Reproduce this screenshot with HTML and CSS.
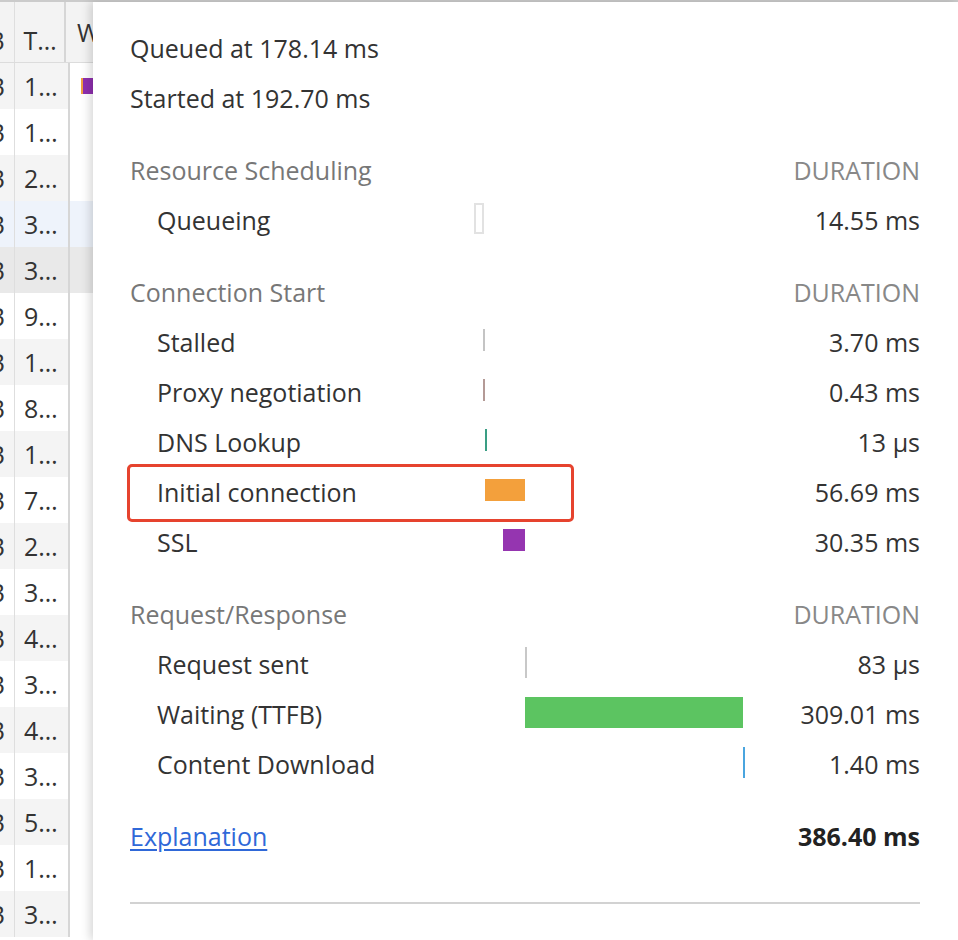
FILE: index.html
```html
<!DOCTYPE html>
<html lang="en">
<head>
    <meta charset="UTF-8">
    <meta name="viewport" content="width=device-width, initial-scale=1.0">
    <title>Timing</title>
    <link rel="stylesheet" href="styles.css">
</head>
<body>
    <div class="page">
        <div class="network">
            <div class="net-row net-header">
                <div class="col-size">kB</div>
                <div class="col-time">T…</div>
                <div class="col-fall">W</div>
            </div>
            <div class="net-row"><div class="col-size">kB</div><div class="col-time">1…</div><div class="col-fall"><span class="mini-bar"></span></div></div>
            <div class="net-row"><div class="col-size">kB</div><div class="col-time">1…</div><div class="col-fall"></div></div>
            <div class="net-row"><div class="col-size">kB</div><div class="col-time">2…</div><div class="col-fall"></div></div>
            <div class="net-row hover"><div class="col-size">kB</div><div class="col-time">3…</div><div class="col-fall"></div></div>
            <div class="net-row selected"><div class="col-size">kB</div><div class="col-time">3…</div><div class="col-fall"></div></div>
            <div class="net-row"><div class="col-size">kB</div><div class="col-time">9…</div><div class="col-fall"></div></div>
            <div class="net-row"><div class="col-size">kB</div><div class="col-time">1…</div><div class="col-fall"></div></div>
            <div class="net-row"><div class="col-size">kB</div><div class="col-time">8…</div><div class="col-fall"></div></div>
            <div class="net-row"><div class="col-size">kB</div><div class="col-time">1…</div><div class="col-fall"></div></div>
            <div class="net-row"><div class="col-size">kB</div><div class="col-time">7…</div><div class="col-fall"></div></div>
            <div class="net-row"><div class="col-size">kB</div><div class="col-time">2…</div><div class="col-fall"></div></div>
            <div class="net-row"><div class="col-size">kB</div><div class="col-time">3…</div><div class="col-fall"></div></div>
            <div class="net-row"><div class="col-size">kB</div><div class="col-time">4…</div><div class="col-fall"></div></div>
            <div class="net-row"><div class="col-size">kB</div><div class="col-time">3…</div><div class="col-fall"></div></div>
            <div class="net-row"><div class="col-size">kB</div><div class="col-time">4…</div><div class="col-fall"></div></div>
            <div class="net-row"><div class="col-size">kB</div><div class="col-time">3…</div><div class="col-fall"></div></div>
            <div class="net-row"><div class="col-size">kB</div><div class="col-time">5…</div><div class="col-fall"></div></div>
            <div class="net-row"><div class="col-size">kB</div><div class="col-time">1…</div><div class="col-fall"></div></div>
            <div class="net-row"><div class="col-size">kB</div><div class="col-time">3…</div><div class="col-fall"></div></div>
        </div>

        <div class="timing-popover">
            <div class="timing">
                <div class="meta">Queued at 178.14 ms</div>
                <div class="meta">Started at 192.70 ms</div>

                <div class="section">
                    <div class="t-row t-head">
                        <span class="t-label">Resource Scheduling</span>
                        <span class="t-bar"></span>
                        <span class="t-value">DURATION</span>
                    </div>
                    <div class="t-row">
                        <span class="t-label">Queueing</span>
                        <span class="t-bar"><i class="bar queueing" style="margin-left: 0; width: 10px;"></i></span>
                        <span class="t-value">14.55 ms</span>
                    </div>
                </div>

                <div class="section">
                    <div class="t-row t-head">
                        <span class="t-label">Connection Start</span>
                        <span class="t-bar"></span>
                        <span class="t-value">DURATION</span>
                    </div>
                    <div class="t-row">
                        <span class="t-label">Stalled</span>
                        <span class="t-bar"><i class="bar short stalled" style="margin-left: 9px; width: 2px;"></i></span>
                        <span class="t-value">3.70 ms</span>
                    </div>
                    <div class="t-row">
                        <span class="t-label">Proxy negotiation</span>
                        <span class="t-bar"><i class="bar short proxy" style="margin-left: 9px; width: 2px;"></i></span>
                        <span class="t-value">0.43 ms</span>
                    </div>
                    <div class="t-row">
                        <span class="t-label">DNS Lookup</span>
                        <span class="t-bar"><i class="bar short dns" style="margin-left: 11px; width: 2px;"></i></span>
                        <span class="t-value">13 µs</span>
                    </div>
                    <div class="t-row highlight">
                        <span class="t-label">Initial connection</span>
                        <span class="t-bar"><i class="bar short connecting" style="margin-left: 11px; width: 40px;"></i></span>
                        <span class="t-value">56.69 ms</span>
                    </div>
                    <div class="t-row">
                        <span class="t-label">SSL</span>
                        <span class="t-bar"><i class="bar short ssl" style="margin-left: 29px; width: 22px;"></i></span>
                        <span class="t-value">30.35 ms</span>
                    </div>
                </div>

                <div class="section">
                    <div class="t-row t-head">
                        <span class="t-label">Request/Response</span>
                        <span class="t-bar"></span>
                        <span class="t-value">DURATION</span>
                    </div>
                    <div class="t-row">
                        <span class="t-label">Request sent</span>
                        <span class="t-bar"><i class="bar sending" style="margin-left: 51px; width: 2px;"></i></span>
                        <span class="t-value">83 µs</span>
                    </div>
                    <div class="t-row">
                        <span class="t-label">Waiting (TTFB)</span>
                        <span class="t-bar"><i class="bar waiting" style="margin-left: 51px; width: 218px;"></i></span>
                        <span class="t-value">309.01 ms</span>
                    </div>
                    <div class="t-row">
                        <span class="t-label">Content Download</span>
                        <span class="t-bar"><i class="bar receiving" style="margin-left: 269px; width: 2px;"></i></span>
                        <span class="t-value">1.40 ms</span>
                    </div>
                </div>

                <div class="t-row t-total">
                    <span class="t-label"><a class="t-link" href="#">Explanation</a></span>
                    <span class="t-bar"></span>
                    <span class="t-value">386.40 ms</span>
                </div>

                <div class="divider"></div>
            </div>
        </div>
    </div>
</body>
</html>
```

FILE: styles.css
```css
* {
    margin: 0;
    padding: 0;
    box-sizing: border-box;
}

body {
    font-family: "Open Sans", "Noto Sans", sans-serif;
    font-size: 25px;
    color: #333;
    background: #fff;
    width: 958px;
    height: 940px;
    overflow: hidden;
}

.page {
    position: relative;
    height: 940px;
    border-top: 2px solid #cbcbcb;
}

/* network table behind the popover */

.network {
    width: 100px;
}

.net-row {
    display: flex;
    height: 46px;
    line-height: 46px;
}

.net-row:nth-child(even) .col-size,
.net-row:nth-child(even) .col-time {
    background: #f4f4f4;
}

.net-row.hover .col-size,
.net-row.hover .col-time,
.net-row.hover .col-fall {
    background: #eef3fb;
}

.net-row.selected .col-size,
.net-row.selected .col-time,
.net-row.selected .col-fall {
    background: #e9e9e9;
}

.net-header {
    height: 61px;
    border-bottom: 1px solid #dcdcdc;
}

.net-header .col-size,
.net-header .col-time,
.net-header .col-fall {
    background: #f3f3f3;
    line-height: 76px;
}

.col-size {
    width: 15px;
    border-right: 1px solid #dedede;
    overflow: hidden;
    white-space: nowrap;
    text-align: right;
    padding-right: 9px;
    direction: rtl;
}

.col-time {
    width: 55px;
    padding-left: 9px;
    border-right: 2px solid #d6d6d6;
    white-space: nowrap;
    overflow: hidden;
}

.col-fall {
    flex: 1;
    padding-left: 11px;
    background: #fff;
    display: flex;
    align-items: center;
}

.mini-bar {
    display: block;
    width: 14px;
    height: 16px;
    background: #8e2fae;
    border-left: 2px solid #f0a040;
}

/* timing popover */

.timing-popover {
    position: absolute;
    top: 0;
    left: 93px;
    right: 0;
    bottom: 0;
    background: #fff;
    box-shadow: -3px 0 9px rgba(0, 0, 0, 0.16);
    padding: 19px 0 0 37px;
}

.timing {
    width: 790px;
}

.meta {
    height: 50px;
    line-height: 46px;
    padding-top: 4px;
}

.section {
    margin-top: 22px;
}

.t-row {
    display: grid;
    grid-template-columns: 344px 272px 174px;
    height: 50px;
    align-items: center;
}

.t-label,
.t-value {
    height: 50px;
    line-height: 46px;
    padding-top: 4px;
    white-space: nowrap;
}

.t-label {
    padding-left: 27px;
}

.t-value {
    text-align: right;
}

.t-head .t-label {
    padding-left: 0;
    color: #777;
}

.t-head .t-value {
    color: #888;
}

.t-bar {
    display: flex;
    align-items: center;
    height: 50px;
}

.bar {
    display: block;
    height: 31px;
}

.bar.short {
    height: 22px;
}

.queueing {
    background: #fff;
    border: 2px solid #e2e2e2;
}

.stalled {
    background: #c4c4c4;
}

.proxy {
    background: #b49a96;
}

.dns {
    background: #3a9e84;
}

.connecting {
    background: #f3a03c;
}

.ssl {
    background: #9535b0;
}

.sending {
    background: #c8c8c8;
}

.waiting {
    background: #5cc461;
}

.receiving {
    background: #4aa5df;
}

.highlight {
    position: relative;
}

.highlight::after {
    content: '';
    position: absolute;
    top: -1px;
    left: -3px;
    width: 441px;
    height: 52px;
    border: 3px solid #e6432e;
    border-radius: 5px;
}

.t-total {
    margin-top: 22px;
}

.t-total .t-label {
    padding-left: 0;
}

.t-link {
    color: #2f68d8;
    text-decoration: underline;
    text-underline-offset: 3px;
}

.t-total .t-value {
    font-weight: 700;
    color: #222;
}

.divider {
    margin-top: 43px;
    height: 2px;
    background: #d2d2d2;
}
```
